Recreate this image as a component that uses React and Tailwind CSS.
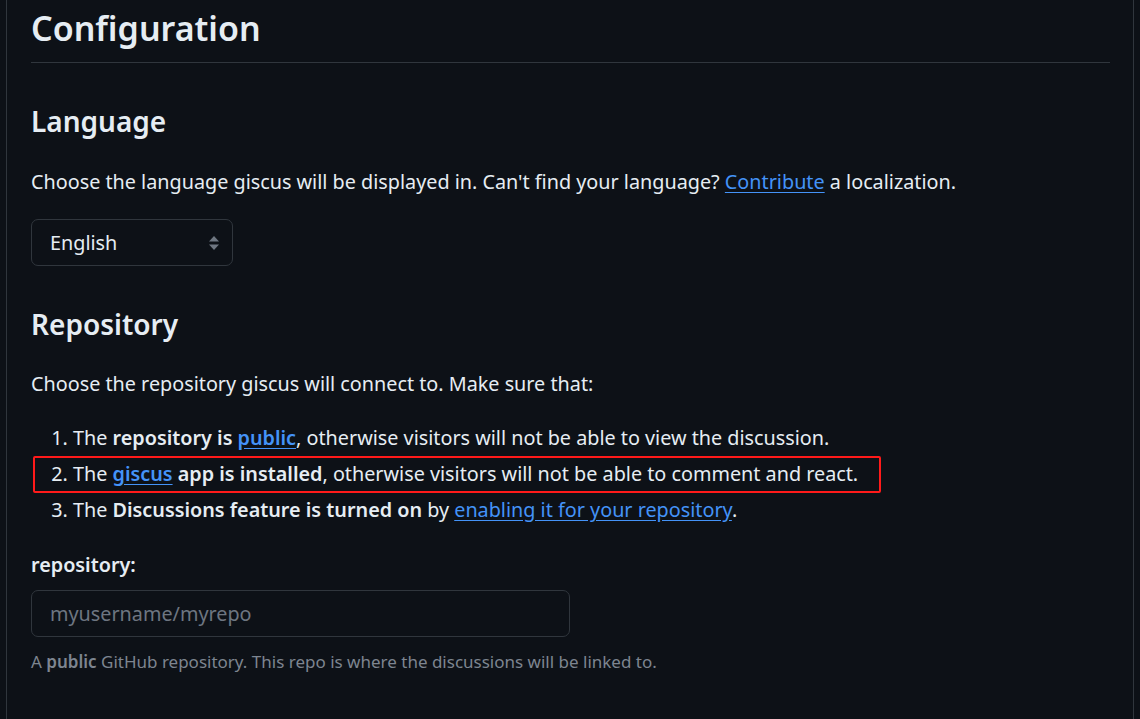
import React from 'react';

function SelectArrows() {
  return (
    <svg width="12" height="18" viewBox="0 0 12 18" className="text-[#6e7681]">
      <path d="M6 2 L11 7.5 L1 7.5 Z" fill="currentColor" />
      <path d="M6 16 L11 10.5 L1 10.5 Z" fill="currentColor" />
    </svg>
  );
}

function Link({ children, bold }) {
  return (
    <a href="#" className={`text-[#4493f8] underline underline-offset-[3px] ${bold ? 'font-semibold' : ''}`}>
      {children}
    </a>
  );
}

export default function App() {
  return (
    <div className="min-h-[719px] w-[1140px] bg-[#0d1117] text-[#e6edf3] font-['Noto_Sans',sans-serif]">
      <div className="ml-[6px] mr-[6px] min-h-[719px] border-x border-[#30363d] pl-[24px] pr-[23px] text-[19.8px]">
        <h1 className="pt-[5px] pb-[11px] text-[34px] font-semibold leading-[46px] border-b border-[#30363d]">
          Configuration
        </h1>

        <h2 className="mt-[40px] text-[28px] font-semibold leading-[36px]">Language</h2>
        <p className="mt-[28px] leading-[30px]">
          Choose the language giscus will be displayed in. Can't find your language?{' '}
          <Link>Contribute</Link> a localization.
        </p>
        <div className="mt-[22px] flex h-[47px] w-[202px] items-center justify-between rounded-[7px] border border-[#30363d] pl-[18px] pr-[12px]">
          <span>English</span>
          <SelectArrows />
        </div>

        <h2 className="mt-[40px] text-[28px] font-semibold leading-[36px]">Repository</h2>
        <p className="mt-[27px] leading-[30px]">
          Choose the repository giscus will connect to. Make sure that:
        </p>
        <ol className="mt-[24px] list-decimal pl-[42px] leading-[30px]">
          <li>
            The <strong className="font-semibold">repository is <Link bold>public</Link></strong>, otherwise visitors will not be able to view the discussion.
          </li>
          <li className="relative mt-[6px]">
            The <Link bold>giscus</Link> <strong className="font-semibold">app is installed</strong>, otherwise visitors will not be able to comment and react.
            <span className="pointer-events-none absolute left-[-40px] top-[-3px] h-[37px] w-[848px] border-[2.5px] border-[#ff1a1a] rounded-[2px]" />
          </li>
          <li className="mt-[6px]">
            The <strong className="font-semibold">Discussions feature is turned on</strong> by <Link>enabling it for your repository</Link>.
          </li>
        </ol>

        <div className="mt-[25px] font-semibold leading-[30px]">repository:</div>
        <div className="mt-[10px] flex h-[47px] w-[539px] items-center rounded-[7px] border border-[#30363d] pl-[18px] text-[#6e7681]">
          myusername/myrepo
        </div>
        <p className="mt-[12px] text-[17px] leading-[26px] text-[#7d8590]">
          A <strong className="font-semibold">public</strong> GitHub repository. This repo is where the discussions will be linked to.
        </p>
      </div>
    </div>
  );
}
